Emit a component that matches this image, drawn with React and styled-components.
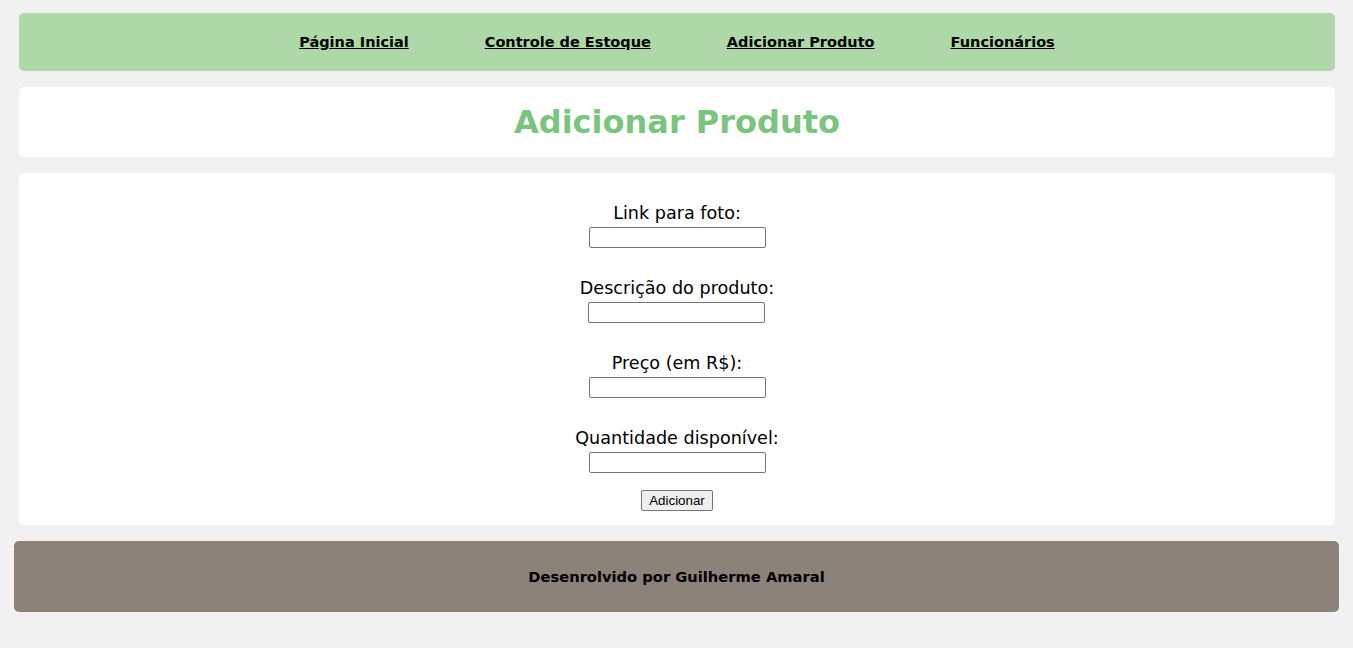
import React from "react";
import styled, { createGlobalStyle } from "styled-components";

const Global = createGlobalStyle`
  html, body { margin: 0; padding: 0; background: #f1f1f1; }
  body { font-family: "DejaVu Sans", Verdana, sans-serif; }
`;

const Page = styled.div`
  padding: 13px 14px 37px;
  display: flex;
  flex-direction: column;
  gap: 16px;
`;

const Section = styled.div`
  margin: 0 4px 0 5px;
  background: ${(p) => p.$bg || "#ffffff"};
  border-radius: 5px;
`;

const Nav = styled(Section).attrs({ as: "nav" })`
  height: 58px;
  display: flex;
  align-items: center;
  justify-content: center;
  gap: 76px;
`;

const NavLink = styled.a`
  font-size: 14.5px;
  font-weight: bold;
  color: #000;
  text-decoration: underline;
  cursor: pointer;
`;

const TitleBox = styled(Section)`
  height: 70px;
  display: flex;
  align-items: center;
  justify-content: center;
`;

const Title = styled.h1`
  margin: 0;
  font-size: 32px;
  font-weight: bold;
  color: #7bc47f;
`;

const FormBox = styled(Section).attrs({ as: "form" })`
  padding: 30px 0 14px;
  display: flex;
  flex-direction: column;
  align-items: center;
`;

const Field = styled.div`
  display: flex;
  flex-direction: column;
  align-items: center;
  gap: 4px;
  margin-bottom: ${(p) => (p.$last ? "17px" : "30px")};
`;

const Label = styled.label`
  font-size: 17.6px;
  line-height: 20px;
  color: #000;
`;

const Input = styled.input`
  box-sizing: border-box;
  width: 177px;
  height: 21px;
  border: 1px solid #767676;
  border-radius: 2px;
  background: #fff;
  padding: 1px 2px;
  font-size: 13.33px;
`;

const Button = styled.button`
  box-sizing: border-box;
  height: 21px;
  padding: 1px 7px;
  border: 1px solid #767676;
  border-radius: 2px;
  background: #efefef;
  font-family: "Liberation Sans", Arial, sans-serif;
  font-size: 13.33px;
  color: #000;
`;

const Footer = styled.footer`
  height: 71px;
  background: #8b8279;
  border-radius: 5px;
  display: flex;
  align-items: center;
  justify-content: center;
  font-size: 14.7px;
  font-weight: bold;
  color: #000;
`;

const fields = [
  "Link para foto:",
  "Descrição do produto:",
  "Preço (em R$):",
  "Quantidade disponível:",
];

export default function App() {
  return (
    <>
      <Global />
      <Page>
        <Nav $bg="#aed8a7">
          <NavLink>Página Inicial</NavLink>
          <NavLink>Controle de Estoque</NavLink>
          <NavLink>Adicionar Produto</NavLink>
          <NavLink>Funcionários</NavLink>
        </Nav>
        <TitleBox>
          <Title>Adicionar Produto</Title>
        </TitleBox>
        <FormBox onSubmit={(e) => e.preventDefault()}>
          {fields.map((f, i) => (
            <Field key={f} $last={i === fields.length - 1}>
              <Label>{f}</Label>
              <Input type="text" />
            </Field>
          ))}
          <Button type="submit">Adicionar</Button>
        </FormBox>
        <Footer>Desenrolvido por Guilherme Amaral</Footer>
      </Page>
    </>
  );
}
